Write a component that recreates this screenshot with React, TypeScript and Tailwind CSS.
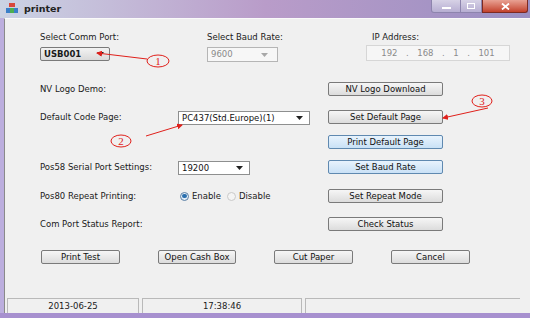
import React from 'react';

const font = { fontFamily: '"DejaVu Sans", Verdana, sans-serif' };

const Btn: React.FC<{ label: string; blue?: boolean; className?: string }> = ({ label, blue, className }) => (
    <div
        className={`h-[14px] flex items-center justify-center rounded-[2px] border text-[8.5px] leading-none text-[#111] ${
            blue
                ? 'border-[#5f89b0] bg-gradient-to-b from-[#e8f3fd] to-[#c9e1f6]'
                : 'border-[#7a7a7a] bg-gradient-to-b from-[#f6f6f6] to-[#dcdcdc]'
        } ${className ?? ''}`}
    >
        {label}
    </div>
);

const Arrow: React.FC<{ dark?: boolean; light?: boolean }> = ({ dark, light }) => (
    <svg width="7" height="4" viewBox="0 0 7 4">
        <path d="M0 0 L7 0 L3.5 4 Z" fill={light ? '#a8a8a8' : dark ? '#222' : '#333'} />
    </svg>
);

const Combo: React.FC<{ value: string; className?: string }> = ({ value, className }) => (
    <div className={`h-[14px] flex items-center justify-between border border-[#8e8f8f] bg-white px-[3px] text-[8.5px] leading-none text-[#111] ${className ?? ''}`}>
        <span>{value}</span>
        <span className="pr-[3px]"><Arrow dark /></span>
    </div>
);

const Radio: React.FC<{ checked?: boolean; label: string }> = ({ checked, label }) => (
    <div className="flex items-center gap-[3px]">
        <div className={`w-[9px] h-[9px] rounded-full border flex items-center justify-center ${checked ? 'border-[#5b7fa3] bg-[#e4eef8]' : 'border-[#c9c9c9] bg-[#f4f4f4]'}`}>
            {checked && <div className="w-[5px] h-[4px] rounded-full bg-[#2b6fae]" />}
        </div>
        <span>{label}</span>
    </div>
);

const Row: React.FC<{ label: string; mid?: React.ReactNode; btn: React.ReactNode; className?: string }> = ({ label, mid, btn, className }) => (
    <div className={`grid grid-cols-[138px_150px_115px] items-center h-[14px] ${className ?? ''}`}>
        <span>{label}</span>
        <div className="flex items-center">{mid}</div>
        {btn}
    </div>
);

export default function App() {
    return (
        <div className="w-[533px] h-[320px] bg-white overflow-hidden relative" style={font}>
            <div className="w-[530px] h-[318px] flex flex-col bg-[#bcaede]">
                {/* title bar */}
                <div className="h-[18px] shrink-0 flex items-start justify-between bg-gradient-to-r from-[#cbd3e4] via-[#b99cc9] to-[#9a8fc2]">
                    <div className="flex items-center gap-[6px] pl-[6px] pt-[3px]">
                        <svg width="12" height="11" viewBox="0 0 12 11">
                            <rect x="3" y="0" width="6" height="4" fill="#d9473a" />
                            <rect x="0" y="5" width="4" height="5" fill="#3a7fc8" />
                            <rect x="4" y="5" width="4" height="5" fill="#4caf50" />
                            <rect x="8" y="5" width="4" height="5" fill="#3a7fc8" />
                        </svg>
                        <span className="text-[9.5px] font-bold leading-none text-[#222]">printer</span>
                    </div>
                    <div className="flex h-[13px] mr-[2px]">
                        <div className="flex rounded-bl-[3px] border border-t-0 border-[#8d84ad] bg-gradient-to-b from-[#d7d2e6] to-[#b7aed2]">
                            <div className="w-[29px] flex items-center justify-center border-r border-[#8d84ad]">
                                <div className="w-[9px] h-[2px] bg-white mt-[3px]" />
                            </div>
                            <div className="w-[20px] flex items-center justify-center">
                                <div className="w-[8px] h-[6px] border border-white" />
                            </div>
                        </div>
                        <div className="w-[46px] flex items-center justify-center rounded-br-[3px] border border-t-0 border-[#7d2a22] bg-gradient-to-b from-[#e8a193] to-[#c2402b]">
                            <svg width="9" height="7" viewBox="0 0 9 7">
                                <path d="M1 0.5 L8 6.5 M8 0.5 L1 6.5" stroke="white" strokeWidth="1.8" />
                            </svg>
                        </div>
                    </div>
                </div>

                {/* client area */}
                <div className="flex-1 flex flex-col ml-[4px] bg-[#f0f0f0] border-l border-[#8a8a8a] border-t border-t-[#fafafa] text-[8.5px] leading-none text-[#1a1a1a]">
                    <div className="flex pl-[35px] pt-[14px]">
                        <div className="w-[167px] flex flex-col gap-[4px]">
                            <span className="h-[10px]">Select Comm Port:</span>
                            <div className="w-[70px] h-[14px] flex items-center justify-between border border-[#7a7a7a] rounded-[2px] bg-gradient-to-b from-[#f3f3f3] to-[#d9d9d9] px-[3px] font-bold">
                                <span>USB001</span>
                                <span className="pr-[2px]"><Arrow dark /></span>
                            </div>
                        </div>
                        <div className="w-[159px] flex flex-col gap-[4px]">
                            <span className="h-[10px]">Select Baud Rate:</span>
                            <div className="w-[71px] h-[15px] flex items-center justify-between border border-[#b5b5b5] bg-[#f7f7f7] px-[3px] text-[#8a8a8a]">
                                <span>9600</span>
                                <span className="pr-[6px]"><Arrow light /></span>
                            </div>
                        </div>
                        <div className="flex flex-col gap-[2px]">
                            <span className="h-[10px] pl-[6px]">IP Address:</span>
                            <div className="w-[144px] h-[16px] flex items-center justify-around border border-[#d6d6d6] bg-[#f6f6f6] px-[10px] text-[#8a8a8a]">
                                <span>192</span><span>.</span><span>168</span><span>.</span><span>1</span><span>.</span><span>101</span>
                            </div>
                        </div>
                    </div>

                    <div className="flex flex-col pl-[35px]">
                        <Row className="mt-[20px]" label="NV Logo Demo:" btn={<Btn label="NV Logo Download" />} />
                        <Row
                            className="mt-[14px]"
                            label="Default Code Page:"
                            mid={<Combo value="PC437(Std.Europe)(1)" className="w-[132px] translate-y-[1px]" />}
                            btn={<Btn label="Set Default Page" />}
                        />
                        <Row className="mt-[11px]" label="" btn={<Btn label="Print Default Page" blue />} />
                        <Row
                            className="mt-[11px]"
                            label="Pos58 Serial Port Settings:"
                            mid={<Combo value="19200" className="w-[72px] translate-y-[1px]" />}
                            btn={<Btn label="Set Baud Rate" blue />}
                        />
                        <Row
                            className="mt-[15px]"
                            label="Pos80 Repeat Printing:"
                            mid={
                                <div className="flex items-center gap-[6px] pl-[2px]">
                                    <Radio checked label="Enable" />
                                    <Radio label="Disable" />
                                </div>
                            }
                            btn={<Btn label="Set Repeat Mode" />}
                        />
                        <Row className="mt-[14px]" label="Com Port Status Report:" btn={<Btn label="Check Status" />} />

                        <div className="flex gap-[38px] mt-[19px] pl-[1px]">
                            <Btn label="Print Test" className="w-[79px]" />
                            <Btn label="Open Cash Box" className="w-[78px]" />
                            <Btn label="Cut Paper" className="w-[79px]" />
                            <Btn label="Cancel" className="w-[79px]" />
                        </div>
                    </div>

                    <div className="flex-1" />

                    {/* status bar */}
                    <div className="h-[15px] flex gap-[3px] pl-[2px] pr-[10px]">
                        <div className="w-[132px] flex items-center justify-center border-t border-l border-r border-[#b9b9b9]">2013-06-25</div>
                        <div className="w-[160px] flex items-center justify-center border-t border-l border-r border-[#b9b9b9]">17:38:46</div>
                        <div className="flex-1 border-t border-l border-[#b9b9b9]" />
                    </div>
                </div>
                <div className="h-[5px] shrink-0 bg-[#a790cf]" />
            </div>

            {/* red annotations drawn over the dialog */}
            <svg className="absolute inset-0 pointer-events-none" width="533" height="320" viewBox="0 0 533 320">
                <defs>
                    <marker id="ah" markerWidth="6" markerHeight="6" refX="5" refY="3" orient="auto">
                        <path d="M0 0 L6 3 L0 6 Z" fill="#e0201b" />
                    </marker>
                </defs>
                <g stroke="#e0201b" strokeWidth="1" fill="none">
                    <line x1="147" y1="59" x2="97" y2="53" markerEnd="url(#ah)" />
                    <ellipse cx="158" cy="61" rx="11" ry="6" />
                    <line x1="146" y1="136" x2="182" y2="125" markerEnd="url(#ah)" />
                    <ellipse cx="121" cy="141" rx="10" ry="6" />
                    <line x1="488" y1="108" x2="443" y2="118" markerEnd="url(#ah)" />
                    <ellipse cx="482" cy="101" rx="10" ry="6" />
                </g>
                <g fill="#e0201b" fontFamily='"Liberation Serif", serif' fontSize="11" textAnchor="middle">
                    <text x="158" y="65">1</text>
                    <text x="121" y="145">2</text>
                    <text x="482" y="105">3</text>
                </g>
            </svg>
        </div>
    );
}
